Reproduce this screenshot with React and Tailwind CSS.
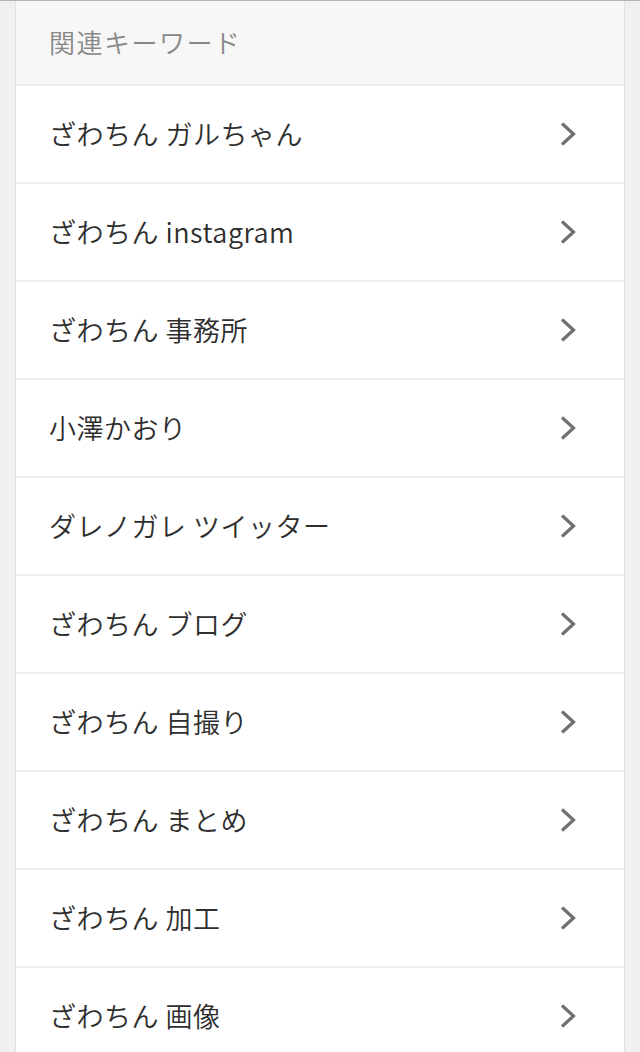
import React from "react";

const items = [
  "ざわちん ガルちゃん",
  "ざわちん instagram",
  "ざわちん 事務所",
  "小澤かおり",
  "ダレノガレ ツイッター",
  "ざわちん ブログ",
  "ざわちん 自撮り",
  "ざわちん まとめ",
  "ざわちん 加工",
  "ざわちん 画像",
];

function Chevron() {
  return (
    <svg width="16" height="26" viewBox="0 0 16 26" className="shrink-0">
      <path d="M2 2.5 L13.5 13 L2 23.5" fill="none" stroke="#707070" strokeWidth="3.2" strokeLinecap="butt" strokeLinejoin="miter" />
    </svg>
  );
}

export default function App() {
  return (
    <div
      className="min-h-[1052px] w-[640px] bg-[#f0f0f0] border-t border-[#b4b4b4] px-[15px]"
      style={{ fontFamily: '"Noto Sans CJK JP", "Noto Sans", sans-serif' }}
    >
      <div className="bg-white border-x border-[#e2e2e2]">
        <div className="h-[83px] bg-[#f7f7f7] flex items-center pl-[33px] text-[26px] font-[350] tracking-[1.5px] text-[#888888] pb-[3px]">
          関連キーワード
        </div>
        {items.map((t) => (
          <div
            key={t}
            className="h-[98px] border-t-2 border-[#ececec] flex items-center justify-between pl-[33px] pr-[48px]"
          >
            <span className="text-[27px] font-[350] text-[#2e2e2e] tracking-[0.5px]">{t}</span>
            <Chevron />
          </div>
        ))}
      </div>
    </div>
  );
}
